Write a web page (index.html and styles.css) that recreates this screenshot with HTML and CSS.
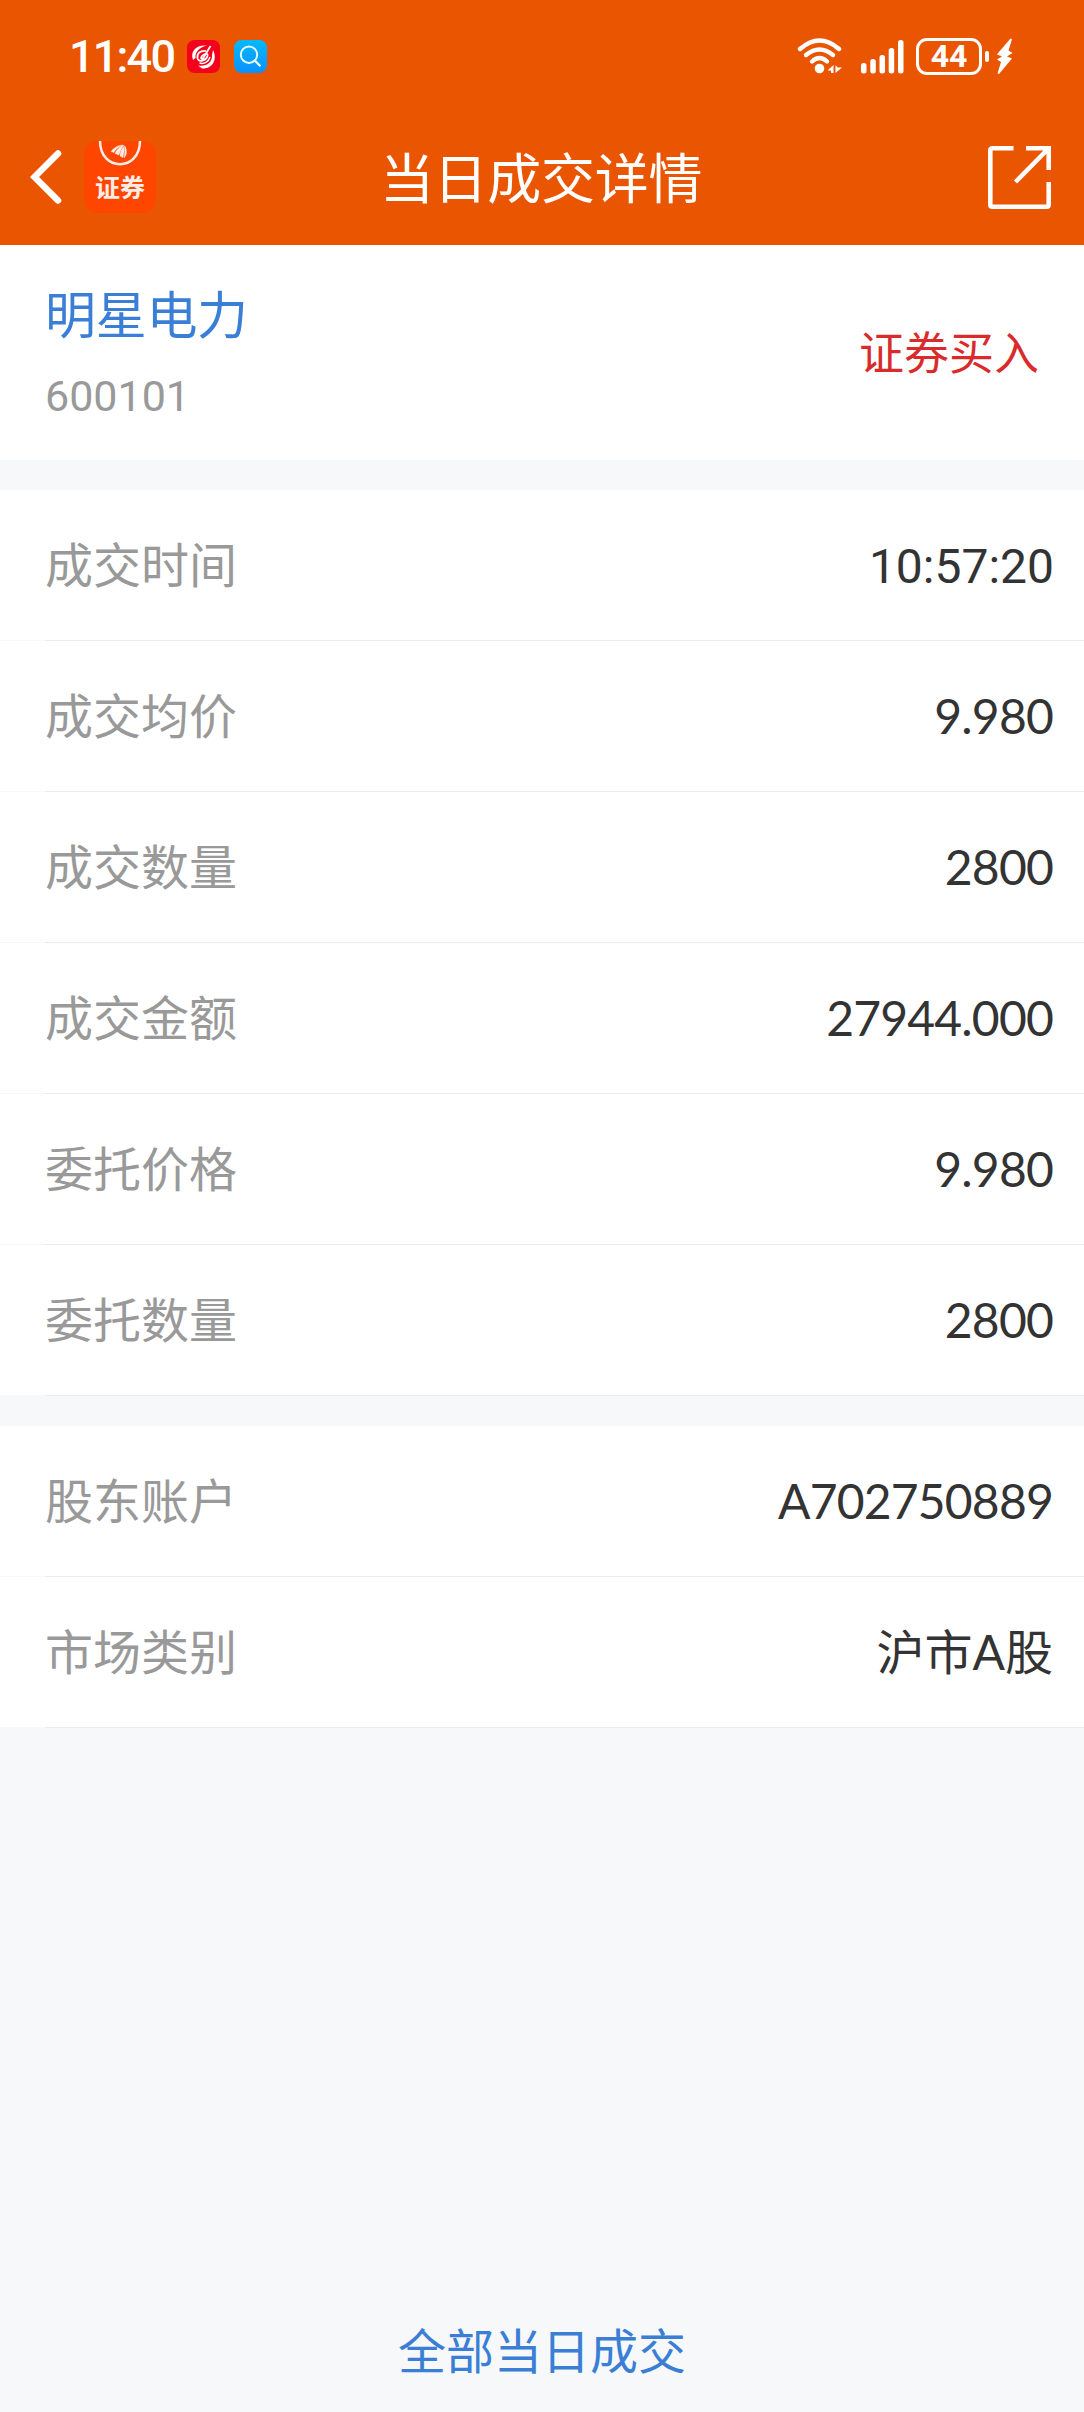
FILE: index.html
```html
<!DOCTYPE html>
<html lang="zh-CN">
<head>
<meta charset="utf-8">
<title>当日成交详情</title>
<link rel="stylesheet" href="styles.css">
</head>
<body>
<div class="page">
  <header class="header">
    <div class="status">
      <div class="status-left">
        <span class="clock">11:40</span>
        <svg class="app-icon" viewBox="0 0 33 33" width="33" height="33">
          <rect width="33" height="33" rx="7.5" fill="#f4001c"/>
          <path d="M6 20C3 11 9 4.500 20 5.500C12 7.500 8 12 8.500 18Z" fill="#fff"/>
          <path d="M26 10C31 20 25 29 15 28.500L11 25.500C20 27 25.500 22 25 15Z" fill="#fff"/>
          <path d="M23.500 6L15 20" stroke="#fff" stroke-width="1.800" fill="none"/>
          <path d="M19 11C13 10 9.500 14 10.500 18.500C12 22.500 19 21 20.500 16C21.500 13 17.500 13 15 16C13 19 15 20 17 18" stroke="#fff" stroke-width="1.700" fill="none"/>
          <path d="M12.500 23C17 24.500 21.500 22 23 17" stroke="#fff" stroke-width="1.500" fill="none"/>
        </svg>
        <svg class="app-icon" viewBox="0 0 33 33" width="33" height="33">
          <defs><linearGradient id="sky" x1="0" y1="0" x2="0" y2="1"><stop offset="0" stop-color="#04b9fc"/><stop offset="1" stop-color="#0b90ff"/></linearGradient></defs>
          <rect width="33" height="33" rx="7.500" fill="url(#sky)"/>
          <circle cx="15" cy="14.700" r="8.200" fill="none" stroke="#e8ffff" stroke-width="2"/>
          <path d="M20.800 20.600L26.500 26.300" stroke="#e8ffff" stroke-width="2.200"/>
        </svg>
      </div>
      <div class="status-right">
        <svg viewBox="0 0 46 38" width="46" height="38" fill="none" stroke="#fff" stroke-width="4.400" stroke-linecap="round">
          <path d="M3 11Q22.500-6 42 11"/>
          <path d="M9 17Q22.500 6 36 17"/>
          <path d="M15 23.500Q22.500 16.500 30 23.500"/>
          <circle cx="22.500" cy="30.500" r="4.800" fill="#fff" stroke="none"/>
          <path d="M36.500 27V35H34V32.500H30.500ZM38.500 35V27L40.500 29.500H45Z" fill="#fff" stroke="none"/>
        </svg>
        <svg class="signal" viewBox="0 0 43 34" width="43" height="34" fill="#fff">
          <rect x="0" y="23" width="5.500" height="10.500" rx="2.500"/>
          <rect x="9.300" y="19" width="5.500" height="14.500" rx="2.500"/>
          <rect x="18.500" y="15" width="5.500" height="18.500" rx="2.500"/>
          <rect x="27.700" y="8" width="5.500" height="25.500" rx="2.500"/>
          <rect x="37" y="0" width="5.500" height="33.500" rx="2.500"/>
        </svg>
        <span class="battery">44</span>
        <span class="nub"></span>
        <svg class="bolt" viewBox="0 0 18 37" width="18" height="37">
          <path d="M14.500 .5L.8 16.500L6 18.500L1 21.500L5 24L1.500 35.500L3 36L16 20.500L11 18.500L16.500 15L12.500 12.500L16 1Z" fill="#fff"/>
        </svg>
      </div>
    </div>
    <nav class="nav">
      <div class="nav-left">
        <svg viewBox="0 0 32 56" width="32" height="56" fill="none" stroke="#fff" stroke-width="6.500" stroke-linecap="round">
          <path d="M28 4.500L4.500 28L28 51.500" stroke-linejoin="miter"/>
        </svg>
        <div class="brand">
          <svg viewBox="0 0 44 26" width="44" height="26" fill="none" stroke="#ffece5">
            <path d="M2 0C2 31 42 31 42 0" stroke-width="2.500"/>
            <path d="M13 10.500Q18 4 25 4Q18 7 16 11.500ZM17 12.500Q20 6 26 4Q22 10 21 14ZM22 15Q22 10 26.500 5Q26 12 25 16.500ZM26 17Q27 12 27 5Q30.500 12 26 17Z" fill="#ffece5" stroke-width=".4"/>
          </svg>
          <span>证券</span>
        </div>
      </div>
      <h1 class="title">当日成交详情</h1>
      <svg class="share" viewBox="0 0 64 64" width="64" height="64" fill="none" stroke="#fff" stroke-width="4.600">
        <path d="M25.500 2.300H4.500Q2.300 2.300 2.300 4.500V58.500Q2.300 60.700 4.500 60.700H58.500Q60.700 60.700 60.700 58.500V36"/>
        <path d="M38 2.300H60.700V24M60 3L27.500 36"/>
      </svg>
    </nav>
  </header>

  <section class="summary">
    <div>
      <div class="stock-name">明星电力</div>
      <div class="stock-code">600101</div>
    </div>
    <div class="side">证券买入</div>
  </section>

  <dl class="group">
    <div class="row"><dt>成交时间</dt><dd class="time">10:57:20</dd></div>
    <div class="row"><dt>成交均价</dt><dd>9.980</dd></div>
    <div class="row"><dt>成交数量</dt><dd>2800</dd></div>
    <div class="row"><dt>成交金额</dt><dd>27944.000</dd></div>
    <div class="row"><dt>委托价格</dt><dd>9.980</dd></div>
    <div class="row"><dt>委托数量</dt><dd>2800</dd></div>
  </dl>
  <dl class="group">
    <div class="row"><dt>股东账户</dt><dd>A702750889</dd></div>
    <div class="row"><dt>市场类别</dt><dd class="market">沪市A股</dd></div>
  </dl>

  <a class="all-trades">全部当日成交</a>
</div>
</body>
</html>
```

FILE: styles.css
```css
* { box-sizing: border-box; }
body, h1, dl, dd { margin: 0; }
body {
  background: #f6f8fa;
  font-family: Roboto, "Noto Sans CJK SC", sans-serif;
  color: #333;
}
svg { display: block; flex: none; }
.page {
  display: flex;
  flex-direction: column;
  min-height: 2412px;
}

.header { height: 245px; background: #ea5502; color: #fff; }
.status {
  display: flex;
  align-items: center;
  justify-content: space-between;
  height: 109px;
  padding: 4px 70px 0 69px;
}
.status-left, .status-right { display: flex; align-items: center; }
.clock { width: 118px; font-size: 45px; font-weight: 500; line-height: 50px; letter-spacing: -1.8px; }
.app-icon { margin-right: 14px; }
.signal { margin-left: 18px; }
.battery {
  width: 66px;
  height: 37px;
  margin-left: 12px;
  border: 3px solid #fff;
  border-radius: 11px;
  font-size: 32px;
  font-weight: 700;
  line-height: 31px;
  text-align: center;
}
.nub { width: 4px; height: 11px; margin-left: 3px; border-radius: 2px; background: #fff; }
.bolt { margin-left: 7px; }

.nav {
  display: grid;
  grid-template-columns: 1fr auto 1fr;
  align-items: center;
  height: 136px;
  padding: 0 32px 0 30px;
}
.nav-left { display: flex; align-items: center; gap: 22px; }
.brand {
  display: flex;
  flex-direction: column;
  align-items: center;
  width: 72px;
  height: 72px;
  border-radius: 14px;
  background: #ff4600;
  color: #ffece5;
}
.brand span { margin-top: 8px; font-size: 25px; font-weight: 700; line-height: 28px; }
.title { padding-top: 7px; font-size: 54px; font-weight: 400; line-height: 60px; letter-spacing: -.3px; }
.share { justify-self: end; margin-top: 2px; }

.summary {
  display: flex;
  justify-content: space-between;
  align-items: center;
  height: 215px;
  padding: 4px 45px 0;
  background: #fff;
}
.stock-name { padding-top: 8px; font-size: 51px; line-height: 76px; color: #3a7fd5; letter-spacing: -.3px; }
.stock-code { font-size: 43px; line-height: 83px; color: #999; }
.side { font-size: 45px; line-height: 60px; color: #d92b2b; }

.group { margin-top: 30px; background: #fff; }
.row {
  display: flex;
  justify-content: space-between;
  align-items: center;
  height: 151px;
  padding: 0 30px 1px 45px;
  font-size: 48px;
  line-height: 60px;
  background: linear-gradient(90deg, #f6f8fa 45px, #ebebec 45px) bottom / 100% 1px no-repeat;
}
dt { padding-top: 3px; color: #999; }
dd { padding-right: 1px; font-family: Lato, "Noto Sans CJK SC", sans-serif; letter-spacing: -.8px; }
.time { padding: 3px 0 0; font-family: Roboto, sans-serif; letter-spacing: 0; }
.market { letter-spacing: 0; }

.all-trades {
  margin: auto auto 29px;
  font-size: 48px;
  line-height: 60px;
  color: #3a7fd5;
}
```
